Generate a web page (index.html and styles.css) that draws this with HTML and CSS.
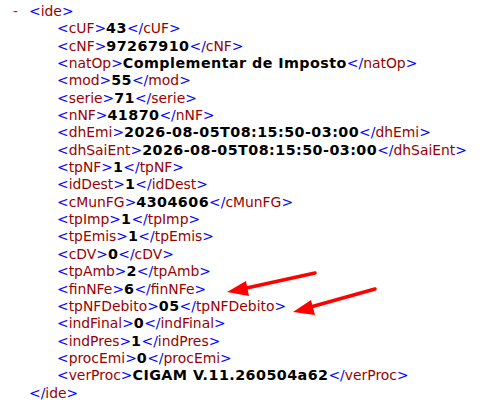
FILE: index.html
```html
<!DOCTYPE html>
<html>
<head>
<meta charset="utf-8">
<link rel="stylesheet" href="styles.css">
</head>
<body>
<div class="doc">
  <div class="line open"><span class="minus">-</span><span class="b">&lt;</span><span class="t">ide</span><span class="b">&gt;</span></div>
  <div class="kids">
    <div class="line"><span class="b">&lt;</span><span class="t">cUF</span><span class="b">&gt;</span><span class="v">43</span><span class="b">&lt;/</span><span class="t">cUF</span><span class="b">&gt;</span></div>
    <div class="line"><span class="b">&lt;</span><span class="t">cNF</span><span class="b">&gt;</span><span class="v">97267910</span><span class="b">&lt;/</span><span class="t">cNF</span><span class="b">&gt;</span></div>
    <div class="line"><span class="b">&lt;</span><span class="t">natOp</span><span class="b">&gt;</span><span class="v">Complementar de Imposto</span><span class="b">&lt;/</span><span class="t">natOp</span><span class="b">&gt;</span></div>
    <div class="line"><span class="b">&lt;</span><span class="t">mod</span><span class="b">&gt;</span><span class="v">55</span><span class="b">&lt;/</span><span class="t">mod</span><span class="b">&gt;</span></div>
    <div class="line"><span class="b">&lt;</span><span class="t">serie</span><span class="b">&gt;</span><span class="v">71</span><span class="b">&lt;/</span><span class="t">serie</span><span class="b">&gt;</span></div>
    <div class="line"><span class="b">&lt;</span><span class="t">nNF</span><span class="b">&gt;</span><span class="v">41870</span><span class="b">&lt;/</span><span class="t">nNF</span><span class="b">&gt;</span></div>
    <div class="line"><span class="b">&lt;</span><span class="t">dhEmi</span><span class="b">&gt;</span><span class="v">2026-08-05T08:15:50-03:00</span><span class="b">&lt;/</span><span class="t">dhEmi</span><span class="b">&gt;</span></div>
    <div class="line"><span class="b">&lt;</span><span class="t">dhSaiEnt</span><span class="b">&gt;</span><span class="v">2026-08-05T08:15:50-03:00</span><span class="b">&lt;/</span><span class="t">dhSaiEnt</span><span class="b">&gt;</span></div>
    <div class="line"><span class="b">&lt;</span><span class="t">tpNF</span><span class="b">&gt;</span><span class="v">1</span><span class="b">&lt;/</span><span class="t">tpNF</span><span class="b">&gt;</span></div>
    <div class="line"><span class="b">&lt;</span><span class="t">idDest</span><span class="b">&gt;</span><span class="v">1</span><span class="b">&lt;/</span><span class="t">idDest</span><span class="b">&gt;</span></div>
    <div class="line"><span class="b">&lt;</span><span class="t">cMunFG</span><span class="b">&gt;</span><span class="v">4304606</span><span class="b">&lt;/</span><span class="t">cMunFG</span><span class="b">&gt;</span></div>
    <div class="line"><span class="b">&lt;</span><span class="t">tpImp</span><span class="b">&gt;</span><span class="v">1</span><span class="b">&lt;/</span><span class="t">tpImp</span><span class="b">&gt;</span></div>
    <div class="line"><span class="b">&lt;</span><span class="t">tpEmis</span><span class="b">&gt;</span><span class="v">1</span><span class="b">&lt;/</span><span class="t">tpEmis</span><span class="b">&gt;</span></div>
    <div class="line"><span class="b">&lt;</span><span class="t">cDV</span><span class="b">&gt;</span><span class="v">0</span><span class="b">&lt;/</span><span class="t">cDV</span><span class="b">&gt;</span></div>
    <div class="line"><span class="b">&lt;</span><span class="t">tpAmb</span><span class="b">&gt;</span><span class="v">2</span><span class="b">&lt;/</span><span class="t">tpAmb</span><span class="b">&gt;</span></div>
    <div class="line"><span class="b">&lt;</span><span class="t">finNFe</span><span class="b">&gt;</span><span class="v">6</span><span class="b">&lt;/</span><span class="t">finNFe</span><span class="b">&gt;</span></div>
    <div class="line"><span class="b">&lt;</span><span class="t">tpNFDebito</span><span class="b">&gt;</span><span class="v">05</span><span class="b">&lt;/</span><span class="t">tpNFDebito</span><span class="b">&gt;</span></div>
    <div class="line"><span class="b">&lt;</span><span class="t">indFinal</span><span class="b">&gt;</span><span class="v">0</span><span class="b">&lt;/</span><span class="t">indFinal</span><span class="b">&gt;</span></div>
    <div class="line"><span class="b">&lt;</span><span class="t">indPres</span><span class="b">&gt;</span><span class="v">1</span><span class="b">&lt;/</span><span class="t">indPres</span><span class="b">&gt;</span></div>
    <div class="line"><span class="b">&lt;</span><span class="t">procEmi</span><span class="b">&gt;</span><span class="v">0</span><span class="b">&lt;/</span><span class="t">procEmi</span><span class="b">&gt;</span></div>
    <div class="line"><span class="b">&lt;</span><span class="t">verProc</span><span class="b">&gt;</span><span class="v">CIGAM V.11.260504a62</span><span class="b">&lt;/</span><span class="t">verProc</span><span class="b">&gt;</span></div>
  </div>
  <div class="line close"><span class="b">&lt;/</span><span class="t">ide</span><span class="b">&gt;</span></div>
</div>
<svg class="arrows" width="487" height="402" viewBox="0 0 487 402">
  <g stroke="#ff0000" stroke-width="3.5" stroke-linecap="round">
    <line x1="315" y1="273" x2="242" y2="289"/>
    <line x1="375" y1="289" x2="307" y2="308"/>
  </g>
  <g fill="#ff0000">
    <polygon points="227,292 246,281 249,296"/>
    <polygon points="293,312 311,300 315,315"/>
  </g>
</svg>
</body>
</html>
```
FILE: styles.css
```css
html, body {
  margin: 0;
  padding: 0;
  background: #ffffff;
}
body {
  width: 487px;
  height: 402px;
  overflow: hidden;
  position: relative;
}
.doc {
  font-family: "DejaVu Sans", Verdana, sans-serif;
  font-size: 13.9px;
  line-height: 17.35px;
  padding-top: 3px;
  white-space: nowrap;
}
.line {
  height: 17.35px;
}
.open {
  padding-left: 13px;
}
.minus {
  color: #ff0000;
  display: inline-block;
  width: 16px;
}
.close {
  padding-left: 29px;
}
.kids {
  padding-left: 57px;
}
.b {
  color: #0000ff;
}
.t {
  color: #990000;
}
.v {
  font-weight: bold;
  color: #000000;
  font-size: 14.3px;
  letter-spacing: 0.45px;
}
.arrows {
  position: absolute;
  left: 0;
  top: 0;
}
```
